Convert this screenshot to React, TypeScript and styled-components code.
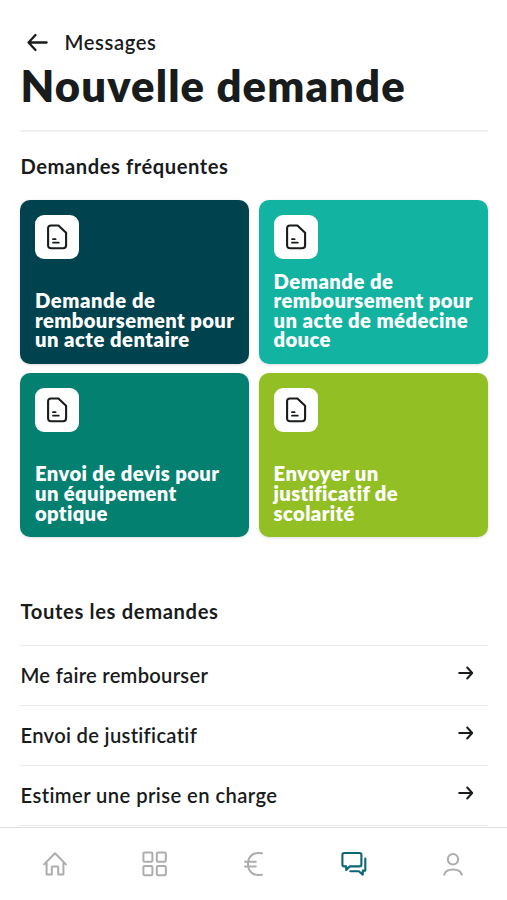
import React from "react";
import styled, { createGlobalStyle } from "styled-components";

const Global = createGlobalStyle`
  *, *::before, *::after { box-sizing: border-box; }
  html, body { margin: 0; background: #fff; overflow: hidden; }
  body { font-family: Lato, "Open Sans", sans-serif; color: #191c1c; }
  h1, h2, p { margin: 0; }
  button { font: inherit; color: inherit; border: 0; background: none; padding: 0; text-align: left; }
`;

const Screen = styled.div`
  width: 100%;
  height: 100vh;
  display: flex;
  flex-direction: column;
  overflow: hidden;
  background: #fff;
`;

const Content = styled.main`
  height: 827px;
  flex: none;
  overflow: hidden;
  padding: 30px 19px 0 20px;
`;

const BackLink = styled.button`
  display: flex;
  align-items: center;
  gap: 15.5px;
  height: 26px;
  padding-left: 6px;
  font-size: 20.2px;
  font-weight: 600;
  line-height: 24px;
  span { padding-bottom: 2px; }
`;

const Title = styled.h1`
  height: 76px;
  padding: 3px 0 0 0.5px;
  font-size: 43.6px;
  font-weight: 800;
  line-height: 52px;
  white-space: nowrap;
  border-bottom: 2px solid #eff0f0;
`;

const SectionTitle = styled.h2`
  padding-left: 0.5px;
  font-size: 20.2px;
  font-weight: 700;
  line-height: 24px;
`;

const Frequent = styled.section`
  padding-top: 22px;
`;

const CardGrid = styled.div`
  display: grid;
  grid-template-columns: 229px 229px;
  grid-auto-rows: 163.7px;
  gap: 9.6px;
  padding-top: 22px;
`;

const Card = styled.button<{ $color: string }>`
  display: flex;
  flex-direction: column;
  justify-content: space-between;
  padding: 14.6px 0 13.8px 15px;
  border-radius: 10px;
  background: ${(p) => p.$color};
  box-shadow: 0 1px 3px rgba(0, 0, 0, 0.14);
  color: #fff;
`;

const IconTile = styled.span`
  display: grid;
  place-items: center;
  width: 44px;
  height: 44px;
  border-radius: 9px;
  background: #fff;
  color: #191c1c;
`;

const CardText = styled.span`
  display: flex;
  flex-direction: column;
  font-size: 20.2px;
  font-weight: 800;
  line-height: 19.6px;
  white-space: nowrap;
`;

const Line = styled.span<{ $track: number }>`
  letter-spacing: ${(p) => p.$track}px;
`;

const All = styled.section`
  padding-top: 62.5px;
`;

const List = styled.div`
  margin-top: 22px;
  border-top: 1.5px solid #e8e9e9;
`;

const Row = styled.button`
  display: flex;
  width: 100%;
  height: 60px;
  align-items: center;
  justify-content: space-between;
  padding: 0 14.5px 0 0.5px;
  border-bottom: 1.5px solid #e8e9e9;
  font-size: 20.2px;
  font-weight: 600;
  span { padding-bottom: 2px; }
  svg { margin-bottom: 5px; }
`;

const Nav = styled.nav`
  display: grid;
  grid-template-columns: repeat(5, 99.6px);
  flex: 1;
  padding: 0 4px 1px 5px;
  border-top: 1px solid #dedfdf;
  background: #fff;
`;

const NavItem = styled.button<{ $active?: boolean }>`
  display: grid;
  place-items: center;
  color: ${(p) => (p.$active ? "#0b6675" : "#adadad")};
`;

const DocIcon = () => (
  <svg width="22" height="26" viewBox="0 0 22 26" fill="none" stroke="currentColor" strokeWidth="2.1" strokeLinecap="round" strokeLinejoin="round">
    <path d="M4.9 1.5H12.4L20.1 8.8V21.3Q20.1 24.3 17.1 24.3H5.1Q2.1 24.3 2.1 21.3V4.3Q2.1 1.5 4.9 1.5Z" />
    <path d="M7 15.2H9.6M7 18.7H12.8" strokeWidth="1.8" />
  </svg>
);

const BackArrow = () => (
  <svg width="23" height="20" viewBox="0 0 23 20" fill="none" stroke="currentColor" strokeWidth="2.3" strokeLinecap="round" strokeLinejoin="round">
    <path d="M20.6 9.5H3M9.5 2L2.5 9.5L9.5 17" />
  </svg>
);

const RowArrow = () => (
  <svg width="16" height="14" viewBox="0 0 16 14" fill="none" stroke="currentColor" strokeWidth="2" strokeLinecap="round" strokeLinejoin="round">
    <path d="M1.2 7H14M9.2 1.5L14.2 7L9.2 12.5" />
  </svg>
);

const NavSvg = ({ children }: { children: React.ReactNode }) => (
  <svg width="26" height="26" viewBox="0 0 26 26" fill="none" stroke="currentColor" strokeWidth="2" strokeLinecap="round" strokeLinejoin="round">
    {children}
  </svg>
);

type TextLine = [text: string, track: number];

const cards: { color: string; lines: TextLine[] }[] = [
  { color: "#00424d", lines: [["Demande de", 0.56], ["remboursement pour", 0.38], ["un acte dentaire", 0.48]] },
  { color: "#13b3a1", lines: [["Demande de", 0.5], ["remboursement pour", 0.38], ["un acte de médecine", 0.42], ["douce", 0.35]] },
  { color: "#048071", lines: [["Envoi de devis pour", 0.4], ["un équipement", 0.38], ["optique", 0.34]] },
  { color: "#92bf24", lines: [["Envoyer un", 0.42], ["justificatif de", 0.34], ["scolarité", 0.4]] },
];

const rows: TextLine[] = [
  ["Me faire rembourser", 0.26],
  ["Envoi de justificatif", 0.3],
  ["Estimer une prise en charge", 0.42],
];

export default function App() {
  return (
    <Screen>
      <Global />
      <Content>
        <BackLink><BackArrow /><Line $track={0.62}>Messages</Line></BackLink>
        <Title><Line $track={1.12}>Nouvelle demande</Line></Title>
        <Frequent>
          <SectionTitle><Line $track={0.54}>Demandes fréquentes</Line></SectionTitle>
          <CardGrid>
            {cards.map((card) => (
              <Card key={card.color} $color={card.color}>
                <IconTile><DocIcon /></IconTile>
                <CardText>
                  {card.lines.map(([text, track]) => <Line key={text} $track={track}>{text}</Line>)}
                </CardText>
              </Card>
            ))}
          </CardGrid>
        </Frequent>
        <All>
          <SectionTitle><Line $track={0.63}>Toutes les demandes</Line></SectionTitle>
          <List>
            {rows.map(([text, track]) => (
              <Row key={text}><Line $track={track}>{text}</Line><RowArrow /></Row>
            ))}
          </List>
        </All>
      </Content>
      <Nav>
        <NavItem aria-label="Accueil">
          <NavSvg><path d="M2 13.4L13 2.2L24 13.4M4.6 12V23.6H9.8V16.3Q9.8 15.4 10.7 15.4H15.3Q16.2 15.4 16.2 16.3V23.6H21.4V12" /></NavSvg>
        </NavItem>
        <NavItem aria-label="Services">
          <NavSvg>
            <rect x="2.4" y="1.5" width="9" height="9.3" rx="1.3" />
            <rect x="15.8" y="1.5" width="9" height="9.3" rx="1.3" />
            <rect x="2.4" y="15" width="9" height="9.3" rx="1.3" />
            <rect x="15.8" y="15" width="9" height="9.3" rx="1.3" />
          </NavSvg>
        </NavItem>
        <NavItem aria-label="Remboursements">
          <NavSvg><path d="M21 2.3C12.5 .4 7 5.5 7 13S12.5 25.6 21 23.7M4 10.7H14.8M4 15.5H14.8" /></NavSvg>
        </NavItem>
        <NavItem aria-label="Messages" $active>
          <NavSvg>
            <path strokeWidth="2.1" d="M3.2 2H18.6Q20.4 2 20.4 3.8V13.6Q20.4 15.4 18.6 15.4H8.7L5.2 19V15.4H3.2Q1.4 15.4 1.4 13.6V3.8Q1.4 2 3.2 2Z" />
            <path strokeWidth="2.1" d="M24.3 7.5V19.6H21.8V23.6L17.8 20.3H9.3" />
          </NavSvg>
        </NavItem>
        <NavItem aria-label="Profil">
          <NavSvg><circle cx="13" cy="8.3" r="5.2" /><path d="M4.2 23.8C5.7 16.6 20.3 16.6 21.8 23.8" /></NavSvg>
        </NavItem>
      </Nav>
    </Screen>
  );
}
